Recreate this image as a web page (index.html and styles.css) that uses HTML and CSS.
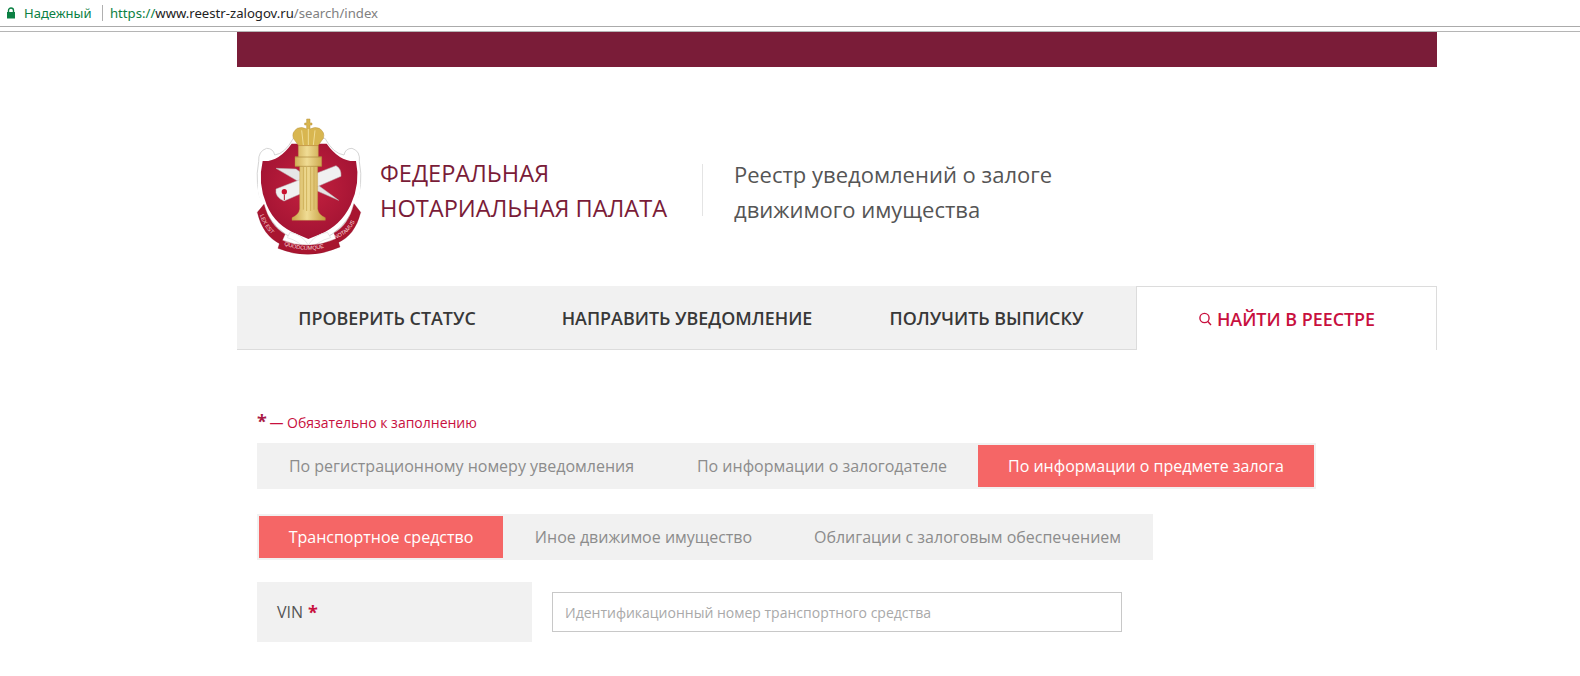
FILE: index.html
```html
<!DOCTYPE html>
<html lang="ru">
<head>
<meta charset="utf-8">
<title>Реестр уведомлений о залоге</title>
<link rel="stylesheet" href="styles.css">
</head>
<body>
<div class="addr">
  <svg class="lock" width="10" height="12" viewBox="0 0 10 12"><path d="M2.5 5V3.5a2.5 2.5 0 0 1 5 0V5" fill="none" stroke="#0b8043" stroke-width="1.4"/><rect x="1" y="5" width="8" height="6.5" fill="#0b8043"/></svg>
  <span class="secure">Надежный</span>
  <span class="sep"></span>
  <span class="url"><span class="proto">https://</span><span class="host">www.reestr-zalogov.ru</span>/search/index</span>
</div>
<div class="gap"></div>
<div class="page">
  <div class="band"></div>
  <header class="head">
    <svg class="logo" width="140" height="160" viewBox="0 0 420 480">
      <defs>
        <linearGradient id="gold" x1="0" y1="0" x2="1" y2="0">
          <stop offset="0" stop-color="#c9a448"/><stop offset=".45" stop-color="#f0dc94"/><stop offset="1" stop-color="#c49c3e"/>
        </linearGradient>
        <radialGradient id="shield" cx=".5" cy=".45" r=".6">
          <stop offset="0" stop-color="#c4213f"/><stop offset="1" stop-color="#a01232"/>
        </radialGradient>
        <path id="arcL" d="M60 330 Q78 385 126 408"/>
        <path id="arcB" d="M132 420 Q205 450 282 418"/>
        <path id="arcR" d="M285 402 Q338 385 356 320"/>
      </defs>
      <path d="M56 170 Q54 138 80 130 Q100 130 104 150 Q135 146 160 100 L255 100 Q280 146 312 150 Q316 130 336 130 Q362 138 358 170 Q372 240 344 305 Q312 375 245 405 L205 425 L168 405 Q100 375 70 305 Q42 240 56 170Z" fill="#fff" stroke="#d5d5d5" stroke-width="3"/>
      <path d="M68 168 Q115 172 155 116 L260 116 Q300 172 348 168 Q362 235 332 300 Q302 362 240 388 L205 402 L172 388 Q106 362 80 300 Q52 235 68 168Z" fill="url(#shield)"/>
      <path d="M58 232 Q54 280 88 334 M356 232 Q360 280 326 334" fill="none" stroke="#fff" stroke-width="9"/>
      <path d="M150 382 Q185 388 205 420 Q225 388 262 382 L272 398 Q232 408 205 440 Q178 408 142 398Z" fill="#fff" stroke="#ddd" stroke-width="2"/>
      <path d="M108 190 L168 192 L296 286 L200 244Z" fill="#e6e6e6" stroke="#bdbdbd" stroke-width="1.5"/>
      <path d="M108 252 L288 182 Q304 190 303 214 L132 288 Q104 276 108 252Z" fill="#f0f0f0" stroke="#bdbdbd" stroke-width="1.5"/>
      <circle cx="133" cy="260" r="8" fill="#c8102e"/>
      <path d="M133 268 V285" stroke="#b0172f" stroke-width="3"/>
      <path d="M200 42 H210 V54 H216 V60 H210 V72 Q224 64 238 70 Q256 82 250 100 L234 122 H176 L160 100 Q154 82 172 70 Q186 64 200 72 V60 H194 V54 H200Z" fill="#d8b650" stroke="#b9933a" stroke-width="1.5"/>
      <path d="M205 72 V120 M185 76 L190 120 M225 76 L220 120" stroke="#f0dc94" stroke-width="3"/>
      <path d="M175 122 H235 V155 H245 V184 H233 V312 Q236 330 256 338 V346 H156 V338 Q176 330 179 312 V184 H165 V155 H175Z" fill="url(#gold)" stroke="#bf9a42" stroke-width="1"/>
      <path d="M165 184 H245 M165 156 H245" stroke="#a9873a" stroke-width="2"/>
      <path d="M190 186 V314 M200 186 V318 M212 186 V318 M222 186 V314" stroke="#c9a850" stroke-width="2.5"/>
      <path d="M52 322 L72 298 Q88 360 135 388 L122 418 Q68 392 52 322Z" fill="#a8152f" stroke="#8c1028" stroke-width="1"/>
      <path d="M362 322 L342 296 Q326 360 282 384 L292 414 Q345 392 362 322Z" fill="#a8152f" stroke="#8c1028" stroke-width="1"/>
      <path d="M122 404 Q205 440 292 400 L300 426 Q205 468 114 430Z" fill="#a8152f" stroke="#8c1028" stroke-width="1"/>
      <text class="logo-text"><textPath href="#arcL">LEX EST</textPath></text>
      <text class="logo-text"><textPath href="#arcB">QUODCUMQUE</textPath></text>
      <text class="logo-text"><textPath href="#arcR">NOTAMUS</textPath></text>
    </svg>
    <div class="org">ФЕДЕРАЛЬНАЯ<br>НОТАРИАЛЬНАЯ ПАЛАТА</div>
    <div class="vline"></div>
    <div class="title">Реестр уведомлений о залоге<br>движимого имущества</div>
  </header>
  <nav class="nav">
    <a class="nav-item w1">ПРОВЕРИТЬ СТАТУС</a>
    <a class="nav-item w2">НАПРАВИТЬ УВЕДОМЛЕНИЕ</a>
    <a class="nav-item w3">ПОЛУЧИТЬ ВЫПИСКУ</a>
    <a class="nav-item active"><svg class="search" width="14" height="14" viewBox="0 0 14 14"><circle cx="6.5" cy="6" r="4.6" fill="none" stroke="#c8103e" stroke-width="1.4"/><path d="M9.8 9.5L13 13" stroke="#c8103e" stroke-width="1.4"/></svg>НАЙТИ В РЕЕСТРЕ</a>
  </nav>
  <main class="content">
    <p class="req"><span class="star">*</span> — Обязательно к заполнению</p>
    <div class="tabs first">
      <span class="tab t1">По регистрационному номеру уведомления</span>
      <span class="tab t2">По информации о залогодателе</span>
      <span class="tab on t3">По информации о предмете залога</span>
    </div>
    <div class="tabs second">
      <span class="tab on t4">Транспортное средство</span>
      <span class="tab t5">Иное движимое имущество</span>
      <span class="tab t6">Облигации с залоговым обеспечением</span>
    </div>
    <div class="row">
      <label class="label">VIN <span class="mark">*</span></label>
      <input class="field" type="text" placeholder="Идентификационный номер транспортного средства">
    </div>
  </main>
</div>
</body>
</html>
```
FILE: styles.css
```css
* { box-sizing: border-box; }
html, body { margin: 0; padding: 0; height: 676px; overflow: hidden; background: #fff; }
body { font-family: "Open Sans", "Noto Sans", sans-serif; }
.addr { height: 27px; display: flex; align-items: center; padding-left: 6px; font-family: "Noto Sans", "Open Sans", sans-serif; font-size: 13px; border-bottom: 1px solid #ababab; }
.lock { margin-right: 8px; }
.secure { color: #0b8043; width: 78px; }
.sep { width: 1px; height: 16px; background: #b0b0b0; margin-right: 7px; }
.url { color: #808080; font-size: 13.15px; }
.proto { color: #0b8043; }
.host { color: #222; }
.gap { height: 5px; border-bottom: 1px solid #b5b5b5; }
.page { width: 1200px; margin-left: 237px; }
.band { height: 35px; background: #7a1c38; }
.head { height: 219px; display: flex; align-items: flex-start; padding-left: 3px; }
.logo { margin-top: 38px; flex: none; }
.logo-text { font: 16.5px "Liberation Sans", sans-serif; fill: #f8dcdc; }
.org { margin: 89px 0 0 0; width: 322px; color: #7a1c38; font-size: 23.6px; line-height: 35px; white-space: nowrap; }
.vline { margin-top: 97px; width: 1px; height: 52px; background: #e4e4e4; flex: none; }
.title { margin: 90px 0 0 31px; color: #555; font-size: 22px; line-height: 35px; white-space: nowrap; }
.nav { display: flex; height: 64px; background: #f1f1f1; border-bottom: 1px solid #dcdcdc; }
.nav-item { display: flex; align-items: center; justify-content: center; color: #383838; font-size: 17.9px; font-weight: 600; white-space: nowrap; }
.w1 { width: 300px; }
.w2 { width: 300px; }
.w3 { width: 299px; }
.active { flex: 1; background: #fff; color: #c8103e; border: 1px solid #dcdcdc; border-bottom: 0; height: 64px; }
.search { margin-right: 5px; }
.content { padding: 0 20px; }
.req { margin: 60px 0 11px; height: 22px; color: #c8103e; font-size: 14px; line-height: 22px; }
.star { font-size: 18px; font-weight: 700; color: #a91a45; margin-right: -1px; }
.tabs { display: flex; background: #f1f1f1; }
.first { width: 1059px; height: 46px; padding: 2px 0; }
.second { width: 896px; height: 46px; margin-top: 25px; padding: 2px; }
.tab { display: flex; align-items: center; justify-content: center; color: #8c8c8c; font-size: 16px; white-space: nowrap; height: 42px; }
.on { background: #f56666; color: #fff; }
.t1 { width: 409px; }
.t2 { width: 312px; }
.t3 { width: 336px; }
.t4 { width: 244px; }
.t5 { width: 281px; }
.t6 { width: 367px; }
.row { display: flex; margin-top: 22px; align-items: center; }
.label { width: 275px; height: 60px; background: #f1f1f1; padding-left: 20px; display: flex; align-items: center; gap: 5px; font-size: 16px; color: #555; }
.mark { color: #c8103e; font-weight: 700; font-size: 18px; }
.field { margin-left: 20px; width: 570px; height: 40px; border: 1px solid #c8c8c8; padding: 0 12px; font: 14px "Open Sans", sans-serif; outline: none; }
.field::placeholder { color: #a9a9a9; opacity: 1; }
```
